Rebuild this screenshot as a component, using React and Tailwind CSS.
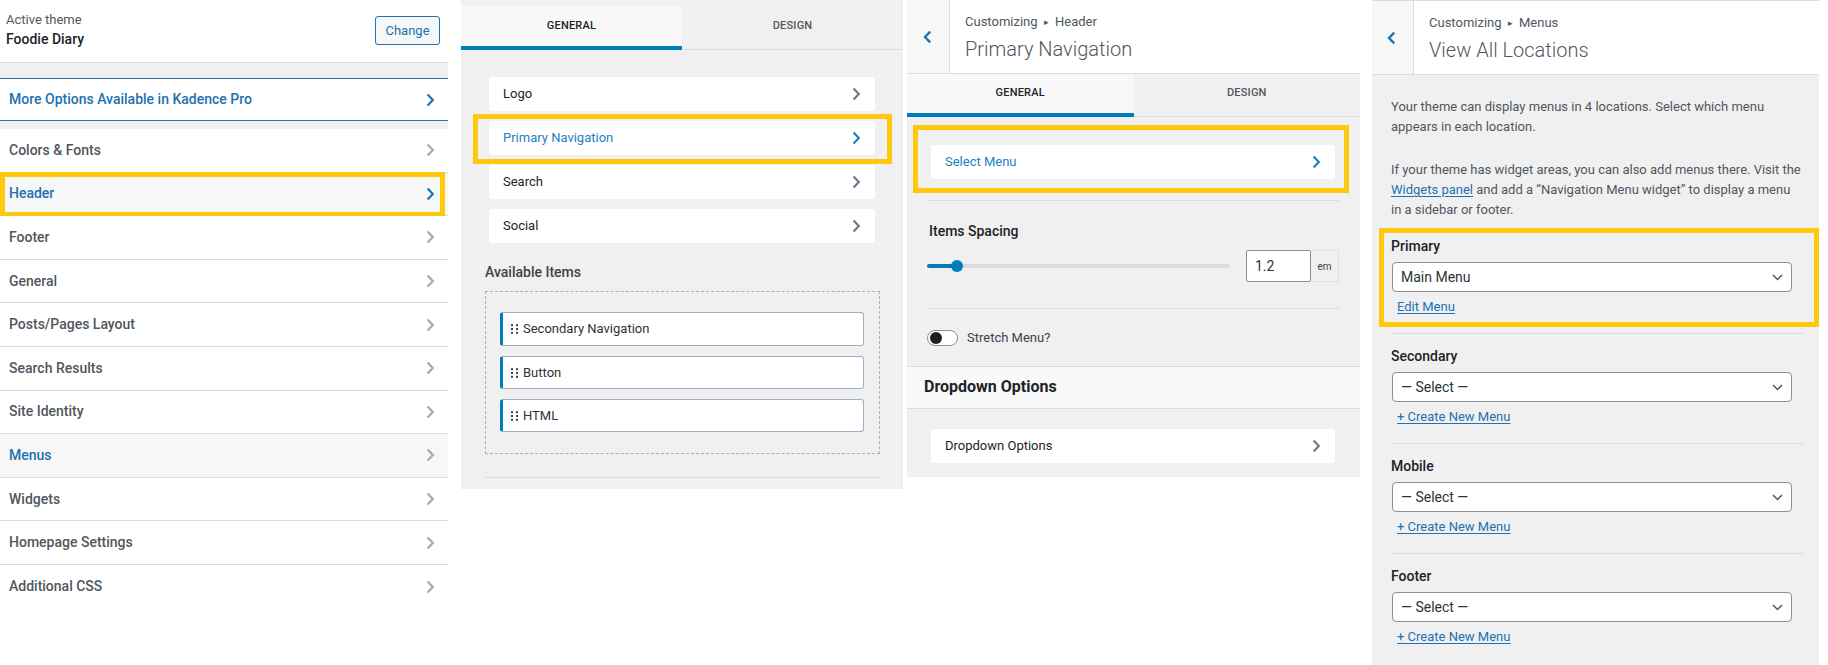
import React from "react";

function ChevronRight({ className = "" }) {
  return (
    <svg width="9" height="14" viewBox="0 0 9 14" fill="none" className={className}>
      <path d="M1.6 1.6 L6.8 7 L1.6 12.4" stroke="currentColor" strokeWidth="2.2" />
    </svg>
  );
}

function ChevronLeft({ className = "" }) {
  return (
    <svg width="9" height="14" viewBox="0 0 9 14" fill="none" className={className}>
      <path d="M7.2 1.6 L2 7 L7.2 12.4" stroke="currentColor" strokeWidth="2.4" />
    </svg>
  );
}

function ChevronDown() {
  return (
    <svg width="11" height="7" viewBox="0 0 11 7" fill="none" className="text-[#50575e]">
      <path d="M1 1 L5.5 5.5 L10 1" stroke="currentColor" strokeWidth="1.5" />
    </svg>
  );
}

function DragHandle() {
  return (
    <svg width="7" height="10" viewBox="0 0 7 10" className="text-[#3c434a]">
      {[1.2, 5, 8.8].map((y) =>
        [1, 6].map((x) => <rect key={`${x}-${y}`} x={x - 1} y={y - 1} width="2" height="2" fill="currentColor" />)
      )}
    </svg>
  );
}

function Highlight({ className }) {
  return <div className={`pointer-events-none absolute border-[5px] border-[#ffc90b] ${className}`} />;
}

const rows = [
  { label: "Colors & Fonts" },
  { label: "Header", active: true, highlight: true },
  { label: "Footer" },
  { label: "General" },
  { label: "Posts/Pages Layout" },
  { label: "Search Results" },
  { label: "Site Identity" },
  { label: "Menus", current: true },
  { label: "Widgets" },
  { label: "Homepage Settings" },
  { label: "Additional CSS" },
];

function PanelOne() {
  return (
    <div className="w-[448px] shrink-0 bg-white">
      <div className="h-[63px] border-b border-[#dcdcde] flex items-start justify-between pl-[6px] pr-[8px]">
        <div className="pt-[11px]">
          <div className="text-[13px] leading-[18px] text-[#50575e]">Active theme</div>
          <div className="text-[14px] leading-[20px] font-medium text-[#1d2327]">Foodie Diary</div>
        </div>
        <button className="mt-[16px] h-[29px] w-[65px] border border-[#2271b1] rounded-[3px] bg-[#f6f7f7] text-[#2271b1] text-[13px] leading-none">
          Change
        </button>
      </div>
      <div className="h-[15px] bg-[#f0f0f0]" />
      <div className="h-[43px] border-y border-[#2271b1] flex items-center justify-between pl-[9px] pr-[13px] bg-white">
        <span className="text-[14px] font-medium text-[#2271b1]">More Options Available in Kadence Pro</span>
        <ChevronRight className="text-[#2271b1]" />
      </div>
      <div className="h-[8px] bg-[#f0f0f0]" />
      {rows.map((r, i) => (
        <div
          key={r.label}
          className={`relative h-[43.6px] flex items-center justify-between pl-[9px] pr-[13px] ${
            i < rows.length - 1 ? "border-b border-[#dcdcde]" : ""
          } ${r.active || r.current ? "bg-[#f6f7f7]" : "bg-white"}`}
        >
          <span
            className={`text-[14px] font-medium ${r.active || r.current ? "text-[#2271b1]" : "text-[#50575e]"}`}
          >
            {r.label}
          </span>
          <ChevronRight className={r.active ? "text-[#2271b1]" : "text-[#a7aaad]"} />
          {r.highlight && <Highlight className="-top-[1px] -bottom-[2px] left-0 right-[3px]" />}
        </div>
      ))}
    </div>
  );
}

function Tabs({ height }) {
  return (
    <div className={`flex ${height}`}>
      <div className="w-1/2 bg-[#f8f8f8] border-b-4 border-[#007cba] flex items-center justify-center text-[11px] font-medium text-[#1d2327] tracking-[0.2px]">
        GENERAL
      </div>
      <div className="w-1/2 border-b border-[#dcdcde] flex items-center justify-center pb-[3px] text-[11px] font-medium text-[#50575e] tracking-[0.2px]">
        DESIGN
      </div>
    </div>
  );
}

function Card({ label, blue, highlight, hlClass }) {
  return (
    <div className="relative h-[34px] bg-white rounded-[3px] flex items-center justify-between pl-[14px] pr-[14px]">
      <span className={`text-[13px] ${blue ? "text-[#1f7fc1]" : "text-[#1d2327]"}`}>{label}</span>
      <ChevronRight className={blue ? "text-[#1f7fc1]" : "text-[#6e7b8c]"} />
      {highlight && <Highlight className={hlClass} />}
    </div>
  );
}

function PanelTwo() {
  return (
    <div className="ml-[13px] w-[442px] h-[489px] shrink-0 bg-[#f0f0f0] pt-[6px]">
      <Tabs height="h-[44px]" />
      <div className="px-[28px] pt-[27px] flex flex-col gap-[10px]">
        <Card label="Logo" />
        <Card
          label="Primary Navigation"
          blue
          highlight
          hlClass="-top-[7px] -bottom-[9px] -left-[16px] -right-[17px]"
        />
        <Card label="Search" />
        <Card label="Social" />
      </div>
      <div className="px-[24px] mt-[19px] text-[14px] leading-[20px] font-medium text-[#3c434a]">Available Items</div>
      <div className="mx-[24px] mr-[23px] mt-[9px] h-[163px] border border-dashed border-[#9fb0c4] pt-[20px] pl-[14px] pr-[15px] flex flex-col gap-[10px]">
        {["Secondary Navigation", "Button", "HTML"].map((t, i) => (
          <div
            key={t}
            className={`${i === 0 ? "h-[34px]" : "h-[33px]"} bg-white border border-[#9fb0c4] border-l-[3px] border-l-[#007cba] rounded-[3px] flex items-center pl-[8px] gap-[5px]`}
          >
            <DragHandle />
            <span className="text-[13px] text-[#2c3338]">{t}</span>
          </div>
        ))}
      </div>
      <div className="mx-[24px] mr-[23px] mt-[23px] border-t border-[#dcdcde]" />
    </div>
  );
}

function SubHeader({ crumb, title, backW }) {
  return (
    <div className="h-[74px] border-b border-[#dcdcde] bg-white flex">
      <div className={`${backW} h-full bg-[#f6f7f7] border-r border-[#dcdcde] flex items-center justify-center pr-[2px]`}>
        <ChevronLeft className="text-[#2271b1]" />
      </div>
      <div className="pl-[15px] pt-[12px]">
        <div className="text-[13px] leading-[20px] text-[#50575e]">
          Customizing <span className="text-[9px] align-[1px] mx-[3px]">▸</span> {crumb}
        </div>
        <div className="mt-[3px] text-[20px] leading-[28px] font-light text-[#50575e]">{title}</div>
      </div>
    </div>
  );
}

function PanelThree() {
  return (
    <div className="ml-[4px] w-[453px] h-[477px] shrink-0 bg-[#f0f0f0]">
      <SubHeader crumb="Header" title="Primary Navigation" backW="w-[43px]" />
      <Tabs height="h-[43px]" />
      <div className="pl-[24px] pr-[25px] pt-[28px]">
        <Card
          label="Select Menu"
          blue
          highlight
          hlClass="-top-[20px] -bottom-[14px] -left-[18px] -right-[14px]"
        />
      </div>
      <div className="ml-[20px] mr-[21px] mt-[21px] border-t border-[#dcdcde]" />
      <div className="ml-[22px] mt-[20px] text-[14px] leading-[20px] font-medium text-[#1d2327]">Items Spacing</div>
      <div className="ml-[20px] mr-[21px] mt-[9px] flex items-center">
        <div className="relative w-[303px] h-[4px] rounded-full bg-[#dcdcde]">
          <div className="w-[30px] h-full rounded-full bg-[#007cba]" />
          <div className="absolute left-[24px] -top-[4px] w-[12px] h-[12px] rounded-full bg-[#007cba]" />
        </div>
        <div className="ml-[16px] w-[65px] h-[32px] bg-white border border-[#8c8f94] rounded-[2px] flex items-center pl-[8px] text-[14px] text-[#2c3338]">
          1.2
        </div>
        <div className="w-[28px] h-[32px] border border-l-0 border-[#e0e0e0] bg-[#f0f0f0] flex items-center justify-center text-[10px] text-[#3c434a]">
          em
        </div>
      </div>
      <div className="ml-[20px] mr-[21px] mt-[26px] border-t border-[#dcdcde]" />
      <div className="ml-[20px] mt-[19px] flex items-center gap-[9px]">
        <div className="w-[31px] h-[16px] rounded-full border border-[#8c8f94] bg-white flex items-center pl-[2px]">
          <div className="w-[12px] h-[12px] rounded-full bg-[#1e1e1e]" />
        </div>
        <span className="text-[13px] text-[#3c434a]">Stretch Menu?</span>
      </div>
      <div className="mt-[18px] h-[43px] border-y border-[#dcdcde] bg-[#f9f9f9] flex items-center pl-[17px] text-[16px] font-bold text-[#1d2327]">
        Dropdown Options
      </div>
      <div className="pl-[24px] pr-[25px] pt-[20px]">
        <Card label="Dropdown Options" />
      </div>
    </div>
  );
}

function Location({ label, value, link, highlight }) {
  return (
    <div className="relative">
      <div className="pl-[19px] text-[14px] leading-[20px] font-medium text-[#1d2327]">{label}</div>
      <div className="ml-[20px] mr-[27px] mt-[6px] h-[30px] bg-white border border-[#8c8f94] rounded-[4px] flex items-center justify-between pl-[8px] pr-[8px]">
        <span className="text-[14px] text-[#2c3338]">{value}</span>
        <ChevronDown />
      </div>
      <div className="pl-[25px] mt-[5px] text-[13px] leading-[20px]">
        <span className="text-[#2271b1] underline underline-offset-[2px]">{link}</span>
      </div>
      {highlight && <Highlight className="-top-[8px] -bottom-[10px] left-[7px] right-0" />}
    </div>
  );
}

function PanelFour() {
  return (
    <div className="ml-[12px] w-[447px] h-[665px] shrink-0 bg-[#f0f0f0] border-t border-[#dcdcde] flex flex-col">
      <SubHeader crumb="Menus" title="View All Locations" backW="w-[42px]" />
      <div className="pl-[19px] pt-[22px] text-[13px] leading-[20px] text-[#50575e] whitespace-nowrap">
        <p>
          Your theme can display menus in 4 locations. Select which menu
          <br />
          appears in each location.
        </p>
        <p className="mt-[23px]">
          If your theme has widget areas, you can also add menus there. Visit the
          <br />
          <span className="text-[#2271b1] underline underline-offset-[2px]">Widgets panel</span> and add a “Navigation Menu widget” to display a menu
          <br />
          in a sidebar or footer.
        </p>
      </div>
      <div className="mt-[16px] flex flex-col">
        <Location label="Primary" value="Main Menu" link="Edit Menu" highlight />
        <div className="ml-[19px] mr-[16px] mt-[16px] mb-[12px] border-t border-[#dcdcde]" />
        <Location label="Secondary" value="— Select —" link="+ Create New Menu" />
        <div className="ml-[19px] mr-[16px] mt-[16px] mb-[12px] border-t border-[#dcdcde]" />
        <Location label="Mobile" value="— Select —" link="+ Create New Menu" />
        <div className="ml-[19px] mr-[16px] mt-[16px] mb-[12px] border-t border-[#dcdcde]" />
        <Location label="Footer" value="— Select —" link="+ Create New Menu" />
      </div>
    </div>
  );
}

export default function App() {
  return (
    <div className="w-[1828px] h-[665px] overflow-hidden bg-white flex items-start font-['Roboto','Noto_Sans',sans-serif]">
      <PanelOne />
      <PanelTwo />
      <PanelThree />
      <PanelFour />
    </div>
  );
}
